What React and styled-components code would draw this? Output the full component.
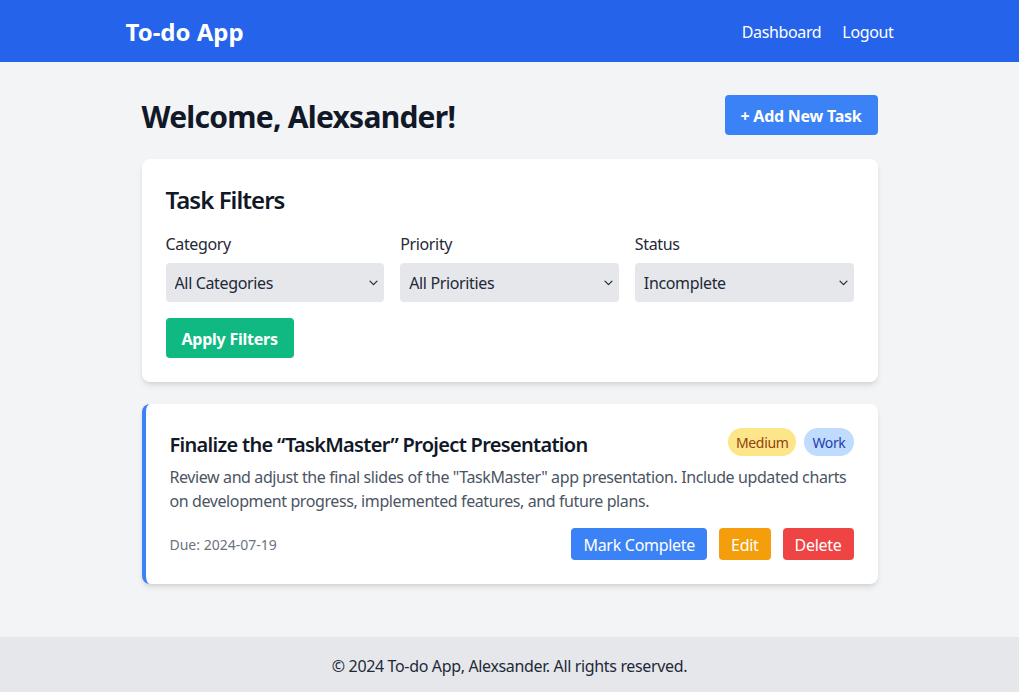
import React from "react";
import styled, { createGlobalStyle } from "styled-components";

const Global = createGlobalStyle`
  * { box-sizing: border-box; }
  html, body { margin: 0; padding: 0; }
  body {
    background: #f3f4f6;
    font-family: "Noto Sans", "Open Sans", sans-serif;
    color: #1f2937;
    letter-spacing: -0.022em;
  }
  button, select { font-family: inherit; letter-spacing: inherit; }
`;

const Page = styled.div`
  min-height: 100vh;
  display: flex;
  flex-direction: column;
`;

const Header = styled.header`
  background: #2563eb;
  color: #fff;
  height: 62px;
  display: flex;
  align-items: center;
`;

const HeaderInner = styled.div`
  width: 768px;
  margin: 0 auto;
  padding-top: 2px;
  display: flex;
  justify-content: space-between;
  align-items: center;
`;

const Logo = styled.div`
  font-size: 24px;
  font-weight: 700;
  line-height: 32px;
  letter-spacing: 0;
`;

const Nav = styled.nav`
  display: flex;
  gap: 21px;
`;

const NavLink = styled.a`
  color: #fff;
  font-size: 16px;
  text-decoration: none;
  line-height: 24px;
`;

const Main = styled.main`
  flex: 1;
  width: 768px;
  margin: 0 auto;
  padding: 33px 16px 31px;
`;

const TopRow = styled.div`
  display: flex;
  justify-content: space-between;
  align-items: center;
  margin-bottom: 24px;
`;

const Heading = styled.h1`
  margin: 0;
  padding-top: 3px;
  font-size: 30px;
  line-height: 36px;
  font-weight: 700;
  color: #111827;
  letter-spacing: -0.025em;
`;

const Button = styled.button`
  border: none;
  border-radius: 4px;
  color: #fff;
  background: ${(p) => p.$bg};
  font-size: 16px;
  line-height: 24px;
  font-weight: ${(p) => (p.$bold ? 700 : 400)};
  letter-spacing: ${(p) => (p.$bold ? "-0.015em" : "-0.018em")};
  padding: ${(p) => (p.$small ? "5px 12px 3px" : "9px 16px 7px")};
  cursor: pointer;
`;

const Card = styled.section`
  background: #fff;
  border-radius: 8px;
  box-shadow: 0 4px 6px -1px rgba(0,0,0,0.1), 0 2px 4px -2px rgba(0,0,0,0.1);
  padding: 24px;
  margin-bottom: 22px;
  border-left: ${(p) => (p.$accent ? `4px solid ${p.$accent}` : "none")};
`;

const CardTitle = styled.h2`
  margin: 0 0 16px;
  padding-top: 1px;
  height: 32px;
  font-size: 24px;
  line-height: 32px;
  font-weight: 600;
  color: #111827;
  letter-spacing: -0.04em;
`;

const FilterGrid = styled.div`
  display: grid;
  grid-template-columns: repeat(3, 1fr);
  gap: 16px;
`;

const Field = styled.div`
  display: flex;
  flex-direction: column;
`;

const Label = styled.label`
  font-size: 16px;
  line-height: 24px;
  padding-top: 1px;
  height: 24px;
  color: #1f2937;
  margin-bottom: 8px;
`;

const SelectWrap = styled.div`
  position: relative;
`;

const Select = styled.select`
  width: 100%;
  appearance: none;
  -webkit-appearance: none;
  background: #e5e7eb;
  border: none;
  border-radius: 4px;
  height: 39px;
  padding: 1px 28px 0 9px;
  font-size: 16px;
  color: #1f2937;
  outline: none;
`;

const Chevron = styled.svg`
  position: absolute;
  right: 6px;
  top: 50%;
  transform: translateY(-50%);
  pointer-events: none;
`;

const Actions = styled.div`
  margin-top: 16px;
`;

const TaskHead = styled.div`
  display: flex;
  justify-content: space-between;
  align-items: center;
  margin-bottom: 8px;
`;

const TaskTitle = styled.h3`
  margin: 0;
  padding-top: 3px;
  height: 28px;
  font-size: 20px;
  line-height: 28px;
  font-weight: 600;
  color: #111827;
  letter-spacing: -0.035em;
`;

const Badges = styled.div`
  display: flex;
  gap: 8px;
`;

const Badge = styled.span`
  font-size: 14px;
  line-height: 20px;
  padding: 5px 8px 3px;
  border-radius: 999px;
  background: ${(p) => p.$bg};
  color: ${(p) => p.$fg};
`;

const Desc = styled.p`
  margin: 0 0 16px;
  padding-top: 1px;
  height: 48px;
  font-size: 16px;
  line-height: 24px;
  color: #4b5563;
  letter-spacing: -0.4px;
`;

const TaskFoot = styled.div`
  display: flex;
  justify-content: space-between;
  align-items: center;
`;

const Due = styled.span`
  font-size: 14px;
  color: #6b7280;
  letter-spacing: 0;
`;

const BtnRow = styled.div`
  display: flex;
  gap: 12px;
`;

const Footer = styled.footer`
  background: #e5e7eb;
  padding: 17px 0 15px;
  text-align: center;
  font-size: 16px;
  line-height: 24px;
  color: #1f2937;
`;

function Dropdown({ id, options }) {
  return (
    <SelectWrap>
      <Select id={id} defaultValue={options[0]}>
        {options.map((o) => (
          <option key={o}>{o}</option>
        ))}
      </Select>
      <Chevron width="9" height="6" viewBox="0 0 9 6" fill="none">
        <path d="M1 1.2l3.5 3.5 3.5-3.5" stroke="#1f2937" strokeWidth="1.2" strokeLinecap="round" strokeLinejoin="round" />
      </Chevron>
    </SelectWrap>
  );
}

export default function App() {
  return (
    <Page>
      <Global />
      <Header>
        <HeaderInner>
          <Logo>To-do App</Logo>
          <Nav>
            <NavLink href="#">Dashboard</NavLink>
            <NavLink href="#">Logout</NavLink>
          </Nav>
        </HeaderInner>
      </Header>
      <Main>
        <TopRow>
          <Heading>Welcome, Alexsander!</Heading>
          <Button $bg="#3b82f6" $bold>+ Add New Task</Button>
        </TopRow>
        <Card>
          <CardTitle>Task Filters</CardTitle>
          <FilterGrid>
            <Field>
              <Label htmlFor="cat">Category</Label>
              <Dropdown id="cat" options={["All Categories", "Work", "Personal"]} />
            </Field>
            <Field>
              <Label htmlFor="pri">Priority</Label>
              <Dropdown id="pri" options={["All Priorities", "High", "Medium", "Low"]} />
            </Field>
            <Field>
              <Label htmlFor="st">Status</Label>
              <Dropdown id="st" options={["Incomplete", "Complete", "All"]} />
            </Field>
          </FilterGrid>
          <Actions>
            <Button $bg="#10b981" $bold>Apply Filters</Button>
          </Actions>
        </Card>
        <Card $accent="#3b82f6">
          <TaskHead>
            <TaskTitle>Finalize the “TaskMaster” Project Presentation</TaskTitle>
            <Badges>
              <Badge $bg="#fde68a" $fg="#92400e">Medium</Badge>
              <Badge $bg="#bfdbfe" $fg="#1e40af">Work</Badge>
            </Badges>
          </TaskHead>
          <Desc>
            Review and adjust the final slides of the "TaskMaster" app presentation. Include updated charts on development progress, implemented features, and future plans.
          </Desc>
          <TaskFoot>
            <Due>Due: 2024-07-19</Due>
            <BtnRow>
              <Button $bg="#3b82f6" $small>Mark Complete</Button>
              <Button $bg="#f59e0b" $small>Edit</Button>
              <Button $bg="#ef4444" $small>Delete</Button>
            </BtnRow>
          </TaskFoot>
        </Card>
      </Main>
      <Footer>© 2024 To-do App, Alexsander. All rights reserved.</Footer>
    </Page>
  );
}
